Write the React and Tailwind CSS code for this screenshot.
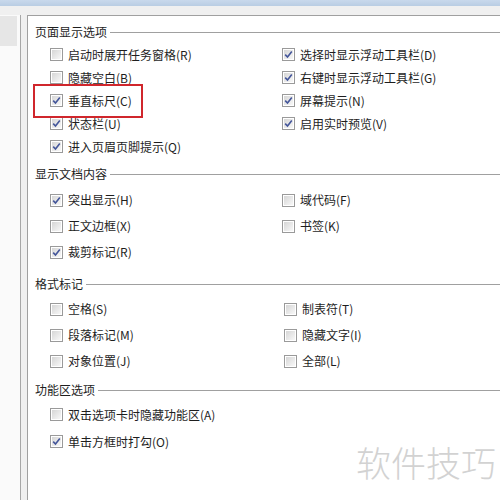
const SECTIONS = [
  {
    title: '页面显示选项',
    mt: 'mt-[6px]',
    rowsMt: 'mt-[1px]',
    rowH: 'h-[23px]',
    left: [
      { label: '启动时展开任务窗格(R)', checked: false },
      { label: '隐藏空白(B)', checked: false },
      { label: '垂直标尺(C)', checked: true },
      { label: '状态栏(U)', checked: true },
      { label: '进入页眉页脚提示(Q)', checked: true },
    ],
    right: [
      { label: '选择时显示浮动工具栏(D)', checked: true },
      { label: '右键时显示浮动工具栏(G)', checked: true },
      { label: '屏幕提示(N)', checked: true },
      { label: '启用实时预览(V)', checked: true },
    ],
  },
  {
    title: '显示文档内容',
    mt: 'mt-[6px]',
    rowsMt: 'mt-[3px]',
    rowH: 'h-[26px]',
    left: [
      { label: '突出显示(H)', checked: true },
      { label: '正文边框(X)', checked: false },
      { label: '裁剪标记(R)', checked: true },
    ],
    right: [
      { label: '域代码(F)', checked: false },
      { label: '书签(K)', checked: false },
    ],
  },
  {
    title: '格式标记',
    mt: 'mt-[9px]',
    rowsMt: 'mt-[2px]',
    rowH: 'h-[26px]',
    rightShift: 'pl-[2px]',
    left: [
      { label: '空格(S)', checked: false },
      { label: '段落标记(M)', checked: false },
      { label: '对象位置(J)', checked: false },
    ],
    right: [
      { label: '制表符(T)', checked: false },
      { label: '隐藏文字(I)', checked: false },
      { label: '全部(L)', checked: false },
    ],
  },
  {
    title: '功能区选项',
    mt: 'mt-[6px]',
    rowsMt: 'mt-[1px]',
    rowH: 'h-[27px]',
    left: [
      { label: '双击选项卡时隐藏功能区(A)', checked: false },
      { label: '单击方框时打勾(O)', checked: true },
    ],
    right: [],
  },
]

function Box({ checked }) {
  return (
    <span className="flex size-[13px] shrink-0 items-center justify-center border border-[#9a9a9a] bg-white">
      <span className="relative flex size-[11px] items-center justify-center border border-white bg-gradient-to-br from-[#d6d6d6] to-[#f8f8f8]">
        {checked && (
          <svg viewBox="0 0 9 9" className="absolute size-[9px]">
            <path d="M1.2 4.6 L3.5 7 L7.8 1.5" fill="none" stroke="#44569a" strokeWidth="1.6" />
          </svg>
        )}
      </span>
    </span>
  )
}

function Item({ label, checked, rowH }) {
  return (
    <div className={`flex items-center gap-[5px] ${rowH}`}>
      <Box checked={checked} />
      <span className="leading-none">{label}</span>
    </div>
  )
}

function Section({ s }) {
  return (
    <div className={s.mt}>
      <div className="flex h-[20px] items-center gap-[3px]">
        <span className="leading-none">{s.title}</span>
        <span className="h-px flex-1 bg-[#a0a0a0]" />
      </div>
      <div className={`${s.rowsMt} flex pl-[15px]`}>
        <div className="w-[232px]">
          {s.left.map((it) => (
            <Item key={it.label} {...it} rowH={s.rowH} />
          ))}
        </div>
        <div className={s.rightShift || ''}>
          {s.right.map((it) => (
            <Item key={it.label} {...it} rowH={s.rowH} />
          ))}
        </div>
      </div>
    </div>
  )
}

export default function App() {
  return (
    <div
      className="relative flex h-[500px] w-[500px] flex-col overflow-hidden bg-[#f0f0f0] text-[12px] text-[#1e1e1e]"
      style={{ fontFamily: '"Noto Sans CJK SC", "Liberation Sans", sans-serif' }}
    >
      <div className="h-[6px] bg-gradient-to-b from-[#c9d9ec] to-[#b9cde3]" />
      <div className="h-[9px] bg-[#f0f0f0]" />
      <div className="flex flex-1">
        <div className="flex w-[21px] flex-col border-r border-[#a7a7a7] bg-[#fafafa]">
          <div className="mt-px h-[30px] w-[17px] bg-[#e6e6e6]" />
        </div>
        <div className="w-[6px] bg-[#f0f0f0]" />
        <div className="flex-1 border-l border-t border-[#a0a0a0] bg-white pl-[7px]">
          {SECTIONS.map((s) => (
            <Section key={s.title} s={s} />
          ))}
        </div>
      </div>
      <div className="pointer-events-none absolute left-[33px] top-[84px] h-[34px] w-[110px] border-2 border-[#d0262c]" />
      <div className="pointer-events-none absolute left-[356px] top-[444px] whitespace-nowrap text-[35px] font-light leading-none text-[#d2d2d2]">
        软件技巧
      </div>
    </div>
  )
}
